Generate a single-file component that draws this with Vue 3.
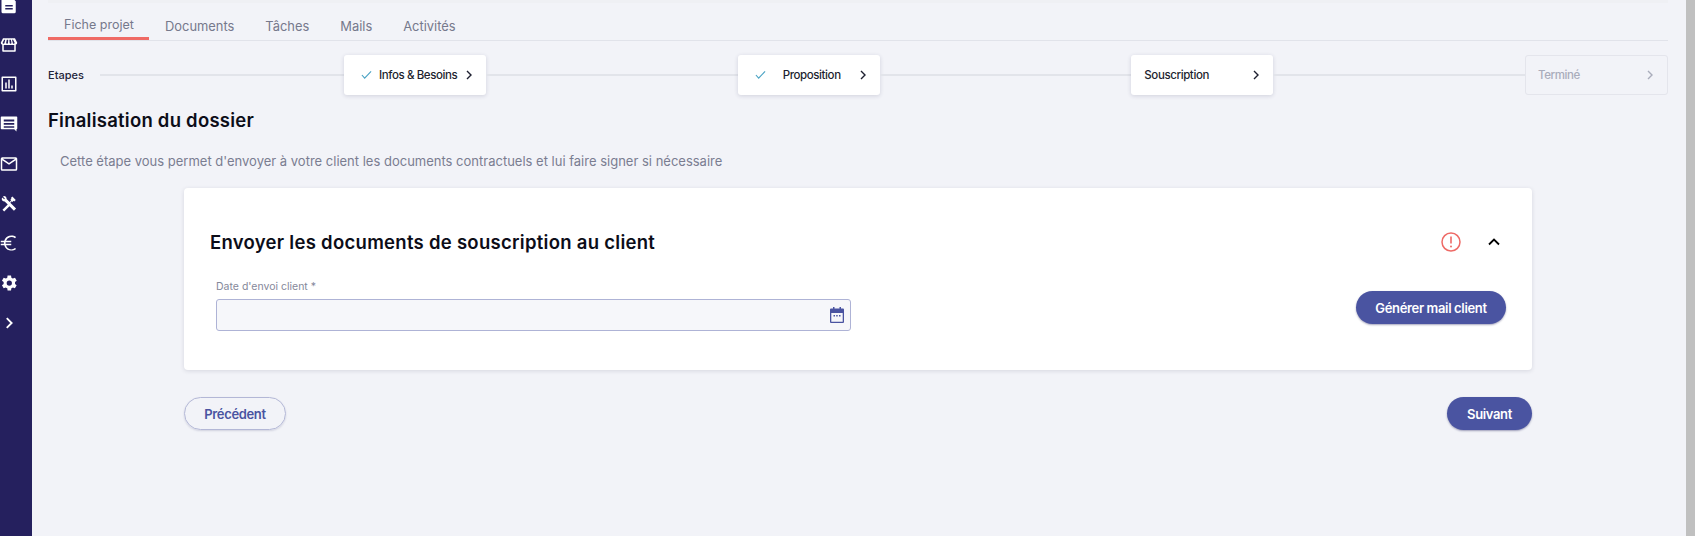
<script setup>
const tabs = ['Fiche projet', 'Documents', 'Tâches', 'Mails', 'Activités']
const steps = [
  { label: 'Infos & Besoins', done: true, state: 'on' },
  { label: 'Proposition', done: true, state: 'on' },
  { label: 'Souscription', done: false, state: 'on' },
  { label: 'Terminé', done: false, state: 'off' },
]
</script>

<template>
  <div class="page">
    <aside class="rail">
      <svg class="ico" viewBox="0 0 24 24"><path d="M4 1h11l6 6v14a2 2 0 0 1-2 2H4a2 2 0 0 1-2-2V3a2 2 0 0 1 2-2zm3 11v2h10v-2zm0 4v2h10v-2z" fill-rule="evenodd"/></svg>
      <svg class="ico" viewBox="0 0 24 24"><path d="M4 3h16l3 6a3 3 0 0 1-2 2.800V20a1 1 0 0 1-1 1H4a1 1 0 0 1-1-1v-8.200A3 3 0 0 1 1 9zm1 9v7h14v-7zM5.500 5 3.500 9a1 1 0 0 0 2.500 0l1-4zm3.500 0-.8 4a1 1 0 0 0 2.500 0l.3-4zm3.500 0 .300 4a1 1 0 0 0 2.500 0l-.8-4zm3.500 0 1 4a1 1 0 0 0 2.500 0l-2-4z" fill-rule="evenodd"/></svg>
      <svg class="ico" viewBox="0 0 24 24"><path d="M3 2h18a1 1 0 0 1 1 1v18a1 1 0 0 1-1 1H3a1 1 0 0 1-1-1V3a1 1 0 0 1 1-1zm1 2v16h16V4zm3 6h2v8H7zm4-4h2v12h-2zm4 8h2v4h-2z" fill-rule="evenodd"/></svg>
      <svg class="ico" viewBox="0 0 24 24"><path d="M2 2h20a1 1 0 0 1 1 1v15a1 1 0 0 1-1 1v3l-3-3H2a1 1 0 0 1-1-1V3a1 1 0 0 1 1-1zm3 4v2.500h14V6zm0 4.500V13h14v-2.500zM5 15v2h14v-2z" fill-rule="evenodd"/></svg>
      <svg class="ico" viewBox="0 0 24 24"><path d="M3 3h18a2 2 0 0 1 2 2v14a2 2 0 0 1-2 2H3a2 2 0 0 1-2-2V5a2 2 0 0 1 2-2zm0 4v12h18V7l-9 6zm.800-2 8.200 5.500L20.200 5z" fill-rule="evenodd"/></svg>
      <svg class="ico" viewBox="0 0 24 24"><path d="m13.700 11.600 2-2 1 1 1.500-1.500.800.800 2-2-4.500-4.500-2 2 .800.800-1.500 1.500 1 1-2 2-4-4c.300-1.800-1-4-3.600-4L4 3.500l2.500 2.500-1 1L3 4.500l-.700 1.800c0 2.500 2.200 3.900 4 3.600l4 4-7 7 2.300 2.300 7-7 6 6 2.800-2.800z"/></svg>
      <svg class="ico" viewBox="0 0 24 24"><path d="M15 20.500A8 8 0 0 1 8 15h7v-2H7.500a8 8 0 0 1 0-2H15V9H8a8 8 0 0 1 12-3.500l1.500-1.500A10 10 0 0 0 5.700 9H1v2h4.300a10 10 0 0 0 0 2H1v2h4.700A10 10 0 0 0 21.500 20L20 18.500a8 8 0 0 1-5 2z"/></svg>
      <svg class="ico" viewBox="0 0 24 24"><path d="M20 13.200a8 8 0 0 0 0-2.400l2.300-1.800-2.300-4-2.800 1.100a8 8 0 0 0-2-1.200L14.700 2h-4.600l-.4 2.900a8 8 0 0 0-2 1.200L4.900 5 2.600 9l2.300 1.800a8 8 0 0 0 0 2.400L2.600 15l2.300 4 2.800-1.100a8 8 0 0 0 2 1.200l.4 2.900h4.600l.4-2.900a8 8 0 0 0 2-1.200l2.800 1.100 2.300-4zM12.400 15.500a3.500 3.500 0 1 1 0-7 3.500 3.500 0 0 1 0 7z" fill-rule="evenodd"/></svg>
      <svg class="ico" viewBox="0 0 24 24"><path d="m9 5.500 6.500 6.500L9 18.500" fill="none" stroke="#fff" stroke-width="2.500"/></svg>
    </aside>

    <main class="main">
      <div class="topbar"></div>
      <nav class="tabs">
        <span v-for="(t, i) in tabs" :key="t" class="tab" :class="{ active: i === 0 }">{{ t }}</span>
      </nav>

      <div class="stepper">
        <span class="etapes">Etapes</span>
        <template v-for="(s, i) in steps" :key="s.label">
          <span class="line" :class="{ lead: i === 0 }"></span>
          <div class="step" :class="s.state">
            <svg v-if="s.done" class="check" viewBox="0 0 12 10"><path d="m1 5 3 3.500L11 1" fill="none" stroke="#4aa3c4" stroke-width="1.200"/></svg>
            <span class="step-label" :class="{ centered: s.done }">{{ s.label }}</span>
            <svg class="step-chev" viewBox="0 0 8 10"><path d="m2 1 4 4-4 4" fill="none" stroke="currentColor" stroke-width="1.400"/></svg>
          </div>
        </template>
      </div>

      <h1 class="title">Finalisation du dossier</h1>
      <p class="intro">Cette étape vous permet d'envoyer à votre client les documents contractuels et lui faire signer si nécessaire</p>

      <div class="center">
        <section class="card">
          <header class="card-head">
            <h2>Envoyer les documents de souscription au client</h2>
            <div class="head-icons">
              <svg class="alert" viewBox="0 0 20 20"><circle cx="10" cy="10" r="9" fill="none" stroke="#ee6a66" stroke-width="1.500"/><path d="M10 4.500v7" stroke="#ee6a66" stroke-width="1.600"/><circle cx="10" cy="14.500" r="1" fill="#ee6a66"/></svg>
              <svg class="up" viewBox="0 0 12 8"><path d="m1 6.500 5-5 5 5" fill="none" stroke="#000" stroke-width="1.800"/></svg>
            </div>
          </header>
          <div class="card-body">
            <div class="field">
              <label>Date d'envoi client *</label>
              <div class="input">
                <svg class="cal" viewBox="0 0 14 16"><path d="M3 0h1.500v1.500h5V0H11v1.500h2a1 1 0 0 1 1 1V15a1 1 0 0 1-1 1H1a1 1 0 0 1-1-1V2.500a1 1 0 0 1 1-1h2zM1.300 6v8.700h11.400V6zM3.500 8H5v1.500H3.500zm2.700 0h1.500v1.500H6.200zM9 8h1.500v1.500H9z" fill="#4a54a1" fill-rule="evenodd"/></svg>
              </div>
            </div>
            <button class="btn primary gen">Générer mail client</button>
          </div>
        </section>
        <div class="actions">
          <button class="btn ghost">Précédent</button>
          <button class="btn primary next">Suivant</button>
        </div>
      </div>
    </main>
    <div class="scrollbar"></div>
  </div>
</template>

<style>
html, body { margin: 0; background: #f2f3f8; overflow: hidden; }
</style>

<style scoped>
.page {
  display: flex;
  height: 536px;
  overflow: hidden;
  font-family: Inter, "Noto Sans", sans-serif;
  background: #f2f3f8;
}
.rail {
  width: 32px;
  flex: none;
  box-sizing: border-box;
  background: #25205e;
  display: flex;
  flex-direction: column;
  padding: 0 15px 0 0;
  align-items: center;
  gap: 21.700px;
  overflow: hidden;
}
.ico { width: 18px; height: 18px; flex: none; fill: #fff; }
.ico:first-child { margin-top: -4px; }
.main { flex: 1; min-width: 0; padding-left: 16px; }
.topbar { width: 1620px; height: 3px; background: #eff0f4; }
.tabs {
  display: flex;
  width: 1620px;
  height: 38px;
  box-sizing: border-box;
  border-bottom: 1px solid #e1e3ea;
  font-size: 12.900px;
  color: #76798c;
}
.tab { padding: 16px 0 0; margin-right: 31px; white-space: nowrap; }
.tab.active {
  box-sizing: border-box;
  width: 101px;
  height: 37px;
  padding: 14px 0 0 16px;
  margin-right: 16px;
  font-size: 12.500px;
  border-bottom: 3px solid #ef6a65;
}
.stepper { display: flex; align-items: center; width: 1620px; height: 40px; margin-top: 14px; }
.etapes { font-size: 11px; color: #23253a; font-weight: 500; width: 52px; }
.line { flex: 1; height: 2px; background: #e2e4ea; }
.line.lead { flex: none; width: 244px; }
.step {
  box-sizing: border-box;
  width: 142px;
  height: 40px;
  display: flex;
  align-items: center;
  background: #fff;
  border-radius: 3px;
  box-shadow: 0 1px 4px rgba(40, 40, 80, .16);
  padding: 0 13px;
  font-size: 11.500px;
  font-weight: 500;
  color: #1d1f30;
}
.step.off {
  width: 143px;
  padding-left: 12px;
  background: transparent;
  box-shadow: none;
  border: 1px solid #e4e5ec;
  color: #a9acbb;
}
.check { width: 11px; height: 10px; margin: 0 7px 0 4px; flex: none; }
.step-label { flex: 1; white-space: nowrap; letter-spacing: -.4px; }
.step-label.centered { text-align: center; padding-right: 8px; }
.step-chev { width: 8px; height: 10px; flex: none; }
.title { font-size: 18.500px; font-weight: 600; color: #0c0d18; margin: 13px 0 0; line-height: 24px; letter-spacing: .24px; }
.intro { font-size: 13px; color: #7a7d91; margin: 20px 0 0 12px; line-height: 18px; }
.center { width: 1348px; margin: 18px 0 0 136px; }
.card {
  box-sizing: border-box;
  height: 182px;
  background: #fff;
  border-radius: 4px;
  box-shadow: 0 1px 4px rgba(40, 40, 80, .14);
  padding: 42px 26px 0;
}
.card-head { display: flex; justify-content: space-between; align-items: center; height: 24px; }
.card-head h2 { font-size: 18.500px; font-weight: 600; color: #0c0d18; margin: 0; letter-spacing: .28px; }
.head-icons { display: flex; align-items: center; gap: 27px; padding-right: 6px; }
.alert { width: 20px; height: 20px; }
.up { width: 12px; height: 8px; }
.card-body { display: flex; justify-content: space-between; align-items: flex-start; margin-top: 26px; }
.field { margin-left: 6px; width: 635px; }
.field label { display: block; font-size: 10.500px; color: #85889a; line-height: 14px; margin-bottom: 5px; }
.input {
  box-sizing: border-box;
  height: 32px;
  background: #f6f7fa;
  border: 1px solid #aeb3d6;
  border-radius: 3px;
  display: flex;
  align-items: center;
  justify-content: flex-end;
  padding-right: 6px;
}
.cal { width: 14px; height: 16px; }
.btn {
  font-family: inherit;
  font-weight: 600;
  font-size: 13px;
  border-radius: 17px;
  height: 33px;
  box-sizing: border-box;
  cursor: pointer;
  letter-spacing: -.35px;
}
.primary { background: #4a54a1; color: #fff; border: none; box-shadow: 0 1px 2px rgba(30, 30, 90, .4); }
.gen { width: 150px; margin-top: 11px; }
.actions { display: flex; justify-content: space-between; margin-top: 27px; }
.ghost { width: 102px; background: transparent; color: #4a54a1; border: 1px solid #b3b7d6; box-shadow: 0 1px 2px rgba(30, 30, 90, .15); }
.next { width: 85px; }
.scrollbar { flex: none; width: 9px; height: 536px; background: #c0c0c0; }
</style>
